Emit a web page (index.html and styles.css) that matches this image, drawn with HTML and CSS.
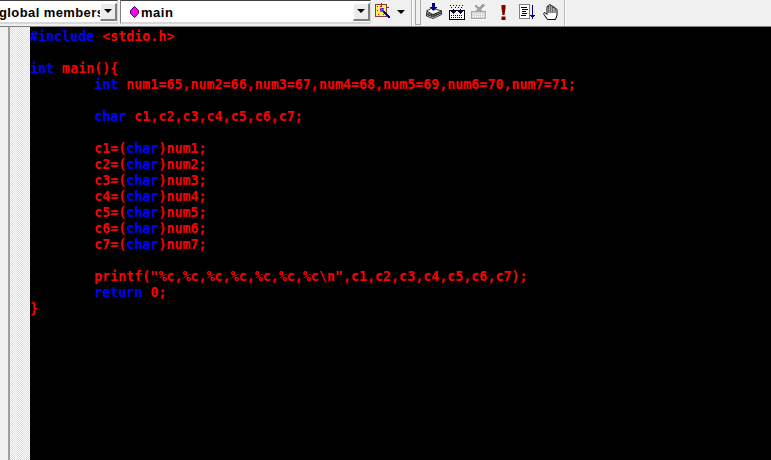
FILE: index.html
```html
<!DOCTYPE html>
<html lang="en">
<head>
<meta charset="utf-8">
<title>main</title>
<link rel="stylesheet" href="styles.css">
</head>
<body>
<div class="toolbar">
  <div class="combo combo-scope"><span class="combo-text">global members</span><span class="drop"><i class="arrow"></i></span></div>
  <div class="combo combo-func">
    <svg class="fn-icon" width="9" height="12" viewBox="0 0 9 12"><path d="M4.500 .5 8.500 4.500 8.500 7 4.500 11.500 .5 7 .5 4.500Z" fill="#f0f" stroke="#400040"/></svg>
    <span class="combo-text">main</span><span class="drop"><i class="arrow"></i></span>
  </div>
  <svg class="icon icon-find" width="17" height="17" viewBox="0 0 17 17">
    <rect x=".5" y="1.500" width="11" height="12" fill="#ffef60" stroke="#804040"/>
    <path d="M2 3h1v1H2zM5 3h1v1H5zM3 11h1v1H3zM8 11h1v1H8zM2 7h1v1H2z" fill="#e00"/>
    <path d="M5 5h4v4H5z" fill="#a050c0"/>
    <path d="M6 0h1v4H6zM0 2h1v1H0zM11 4h3v1h-3z" fill="#e00"/>
    <path d="M8.500 8.500 15 15" stroke="#00c" stroke-width="2"/>
    <path d="M5 6h1v1H5zM7 5h1v1H7zM7 7h1v1H7z" fill="#00c"/>
  </svg>
  <i class="arrow arrow-tool"></i>
  <div class="sep"></div>
  <div class="grip"></div>
  <svg class="icon icon-stack" width="16" height="16" viewBox="0 0 16 16" fill="none" stroke="#000" stroke-width=".8">
    <path d="M.5 11.500V13L7 15.500 15.500 11.500V10L7 14Z" fill="#fff"/>
    <path d="M.5 9.500V11L7 13 15.500 9.500V8L7 12Z" fill="#fff"/>
    <path d="M.5 8 6 5 15.500 8 7 11.500Z" fill="#fff"/>
    <path d="M6 0h3v4h2.500L7.500 8 3.500 4H6Z" fill="#000080" stroke="none"/>
  </svg>
  <svg class="icon icon-keys" width="16" height="16" viewBox="0 0 16 16">
    <path d="M1 1h1v1H1zM4 1h1v1H4zM7 1h1v1H7zM10 1h1v1h-1zM13 1h1v1h-1zM2 3h1v1H2zM6 3h1v1H6zM9 3h1v1H9zM12 3h1v1h-1z" fill="#000080"/>
    <path d="M.5 6.500h15v9H.5z" fill="#fff" stroke="#000"/>
    <path d="M2 7h5l-2.500 3zM9 7h5l-2.500 3z" fill="#000080"/>
    <path d="M4 5h1v2H4zM11 5h1v2h-1z" fill="#000080"/>
    <path d="M2 11h1v1H2zM4 11h1v1H4zM6 11h1v1H6zM8 11h1v1H8zM10 11h1v1h-1zM12 11h1v1h-1zM2 13h1v1H2zM4 13h1v1H4zM6 13h1v1H6zM8 13h1v1H8zM10 13h1v1h-1zM12 13h1v1h-1z" fill="#000"/>
  </svg>
  <svg class="icon icon-keys-off" width="16" height="16" viewBox="0 0 16 16">
    <path d="M.5 7.500h14v7H.5z" fill="#d8d8d8" stroke="#a8a8a8"/>
    <path d="M1 15.500h14.500V8" fill="none" stroke="#fff"/>
    <path d="M2 10h1v1H2zM4 10h1v1H4zM6 10h1v1H6zM8 10h1v1H8zM10 10h1v1h-1zM12 10h1v1h-1zM2 12h1v1H2zM4 12h1v1H4zM6 12h1v1H6zM8 12h1v1H8zM10 12h1v1h-1zM12 12h1v1h-1z" fill="#fff"/>
    <path d="M5 .5 8 3.500 12 0 13.500 1.500 10 5.500 12.500 8H9L7.500 6.500 6 8H3L6 5 3.500 1.500Z" fill="#a0a0a0"/>
  </svg>
  <svg class="icon icon-bang" width="5" height="15" viewBox="0 0 5 15">
    <path d="M.5 0h4v3l-1 7h-2l-1-7zM.5 11.500h4V15h-4z" fill="#800000"/>
  </svg>
  <svg class="icon icon-doc" width="17" height="16" viewBox="0 0 17 16">
    <path d="M.5.5h10v14H.5z" fill="#fff" stroke="#808080"/>
    <path d="M2 3h6v1H2zM3 5h6v1H3zM3 7h4v1H3zM3 9h5v1H3zM2 11h5v1H2z" fill="#000"/>
    <path d="M13 1h1v12h-1z" fill="#000080"/>
    <path d="M11 11h5l-2.500 4z" fill="#000080"/>
  </svg>
  <svg class="icon icon-hand" width="15" height="16" viewBox="0 0 15 16">
    <path d="M4.500 15.500 1 10.500C.2 9 1.500 8 2.500 9L4 10.500V3C4 1.800 5.800 1.800 5.800 3V1.500C5.800.2 7.800.2 7.800 1.500V2.500C7.800 1.300 9.800 1.300 9.800 2.800V3.800C9.800 2.700 12 2.700 12 4V5.500C12 4.500 14 4.500 14 6V11L12.500 15.500Z" fill="#fff" stroke="#000"/>
    <path d="M5.900 3v6M7.900 3v6M9.900 4v5M12 6v3" stroke="#000" stroke-width=".9"/>
  </svg>
  <div class="sep sep-end"></div>
</div>
<div class="main">
  <div class="margin"></div>
  <div class="gutter"></div>
<pre class="code"><span class="k">#include</span> &lt;stdio.h&gt;

<span class="k">int</span> main(){
	<span class="k">int</span> num1=65,num2=66,num3=67,num4=68,num5=69,num6=70,num7=71;

	<span class="k">char</span> c1,c2,c3,c4,c5,c6,c7;

	c1=(<span class="k">char</span>)num1;
	c2=(<span class="k">char</span>)num2;
	c3=(<span class="k">char</span>)num3;
	c4=(<span class="k">char</span>)num4;
	c5=(<span class="k">char</span>)num5;
	c6=(<span class="k">char</span>)num6;
	c7=(<span class="k">char</span>)num7;

	printf("%c,%c,%c,%c,%c,%c,%c\n",c1,c2,c3,c4,c5,c6,c7);
	<span class="k">return</span> 0;
}</pre>
</div>
</body>
</html>
```
FILE: styles.css
```css
html, body { margin: 0; height: 100%; overflow: hidden; }
body { background: #000; font-family: "Liberation Sans", Arial, sans-serif; }
.toolbar { display: flex; align-items: flex-start; height: 27px; background: #f0f0f0; border-bottom: 1px solid #808080; box-sizing: border-box; overflow: hidden; }
.combo { display: flex; align-items: center; flex: none; height: 24px; background: #fff; box-sizing: border-box; border-top: 1px solid #404040; border-bottom: 2px solid #d8d8d8; font-size: 13px; font-weight: bold; letter-spacing: .4px; color: #000; }
.combo-scope { width: 118px; border-right: 1px solid #d8d8d8; }
.combo-func { width: 251px; margin-left: 2px; padding-left: 9px; gap: 2px; letter-spacing: .5px; border-left: 1px solid #808080; border-right: 1px solid #d8d8d8; }
.combo-text { flex: 1; min-width: 0; padding-top: 1px; white-space: nowrap; overflow: hidden; }
.combo-scope .combo-text { margin-left: -1px; }
.drop { flex: none; box-sizing: border-box; width: 17px; height: 18px; background: #ececec; border: 1px solid #fff; border-right: 2px solid #808080; border-bottom: 2px solid #808080; display: flex; align-items: center; justify-content: center; }
.arrow { display: block; border: 4px solid transparent; border-top: 4px solid #000; border-bottom: 0; }
.icon { flex: none; }
.icon-find, .icon-keys, .icon-keys-off, .icon-doc { shape-rendering: crispEdges; }
.icon-find { margin: 3px 0 0 4px; }
.arrow-tool { margin: 10px 0 0 5px; }
.sep { flex: none; width: 2px; height: 26px; background: #b8b8b8; border-right: 1px solid #fff; box-sizing: border-box; margin-left: 6px; }
.grip { flex: none; width: 6px; height: 25px; margin-left: 2px; border: 1px solid #a8a8a8; border-top: 0; box-sizing: border-box; background: #f0f0f0; }
.icon-stack { margin: 3px 0 0 5px; }
.icon-keys { margin: 4px 0 0 7px; }
.icon-keys-off { margin: 4px 0 0 6px; }
.icon-bang { margin: 5px 0 0 14px; }
.icon-doc { margin: 4px 0 0 13px; }
.icon-hand { margin: 4px 0 0 7px; }
.sep-end { margin-left: 6px; }
.main { display: flex; height: 433px; }
.margin { flex: none; width: 10px; box-sizing: border-box; background: #f0f0f0; border-right: 2px solid #a0a0a0; }
.gutter { flex: none; width: 20px; background: conic-gradient(#fff 25%, #dcdcdc 0 50%, #fff 0 75%, #dcdcdc 0) 0 0 / 2px 2px; }
.code { flex: 1; margin: 0; padding: 2px 0 0; background: #000; color: #f00; font: bold 13.33px/16px "DejaVu Sans Mono", monospace; tab-size: 8; }
.k { color: #00f; }
```
